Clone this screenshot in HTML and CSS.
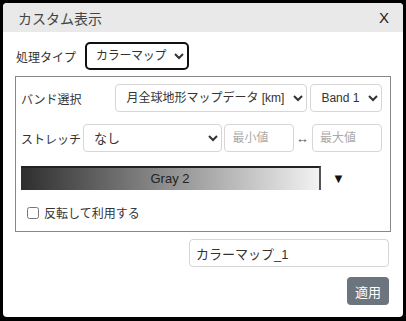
FILE: index.html
```html
<!DOCTYPE html>
<html lang="ja">
<head>
  <meta charset="UTF-8">
  <title>カスタム表示</title>
  <link rel="stylesheet" href="styles.css">
</head>
<body>

<div class="dialog">
  <div class="dialog-head">
    <span class="dialog-title">カスタム表示</span>
    <span class="dialog-close">X</span>
  </div>

  <div class="dialog-body">
    <div class="row type-row">
      <label class="label">処理タイプ</label>
      <select class="type-select">
        <option>カラーマップ</option>
      </select>
    </div>

    <div class="panel">
      <div class="row band-row">
        <label class="label band-label">バンド選択</label>
        <select class="ctrl data-select">
          <option>月全球地形マップデータ [km]</option>
        </select>
        <select class="ctrl band-select">
          <option>Band 1</option>
        </select>
      </div>

      <div class="row stretch-row">
        <label class="label">ストレッチ</label>
        <select class="ctrl stretch-select">
          <option>なし</option>
        </select>
        <input class="ctrl num-input" type="text" placeholder="最小値">
        <span class="range-arrow">↔</span>
        <input class="ctrl num-input" type="text" placeholder="最大値">
      </div>

      <div class="row ramp-row">
        <div class="ramp">Gray 2</div>
        <span class="ramp-toggle">▼</span>
      </div>

      <div class="row check-row">
        <input type="checkbox" id="reverse">
        <label for="reverse">反転して利用する</label>
      </div>
    </div>

    <div class="name-row">
      <input class="ctrl name-input" type="text" value="カラーマップ_1">
    </div>

    <div class="foot">
      <button class="apply">適用</button>
    </div>
  </div>
</div>

</body>
</html>
```

FILE: styles.css
```css
body {
  margin: 0;
  padding: 3px;
  background: #000;
  font-family: 'Liberation Sans', 'Noto Sans CJK JP', sans-serif;
  font-size: 12px;
  color: #333;
}
.dialog {
  width: 400px;
  height: 314px;
  background: #fff;
  border-radius: 4px;
  overflow: hidden;
}
.dialog-head {
  height: 29px;
  background: #e9e9e9;
  display: flex;
  align-items: center;
  justify-content: space-between;
  padding: 0 14px 0 15px;
}
.dialog-title {
  font-size: 14px;
  color: #444;
}
.dialog-close {
  font-size: 15px;
  color: #222;
}
.dialog-body {
  padding: 10px 12px 0 12px;
}
.row {
  display: flex;
  align-items: center;
}
.label {
  white-space: nowrap;
}
.type-row {
  height: 28px;
  padding-left: 1px;
}
.type-select {
  margin-left: 9px;
  width: 104px;
  height: 28px;
  border: 2px solid #111;
  border-radius: 5px;
  background: #fff;
  font: inherit;
  letter-spacing: -0.3px;
  color: #333;
  padding: 0 0 0 5px;
}
.panel {
  margin-top: 6px;
  border: 1px solid #888;
  padding: 7px 8px 0 5px;
  height: 147px;
}
.ctrl {
  height: 28px;
  box-sizing: border-box;
  border: 1px solid #d6d6d6;
  border-radius: 4px;
  background: #fff;
  font: inherit;
  color: #333;
}
.band-label {
  width: 95px;
}
.data-select {
  width: 192px;
  padding: 0 6px;
}
.band-select {
  width: 72px;
  margin-left: 3px;
  padding: 0 0 0 6px;
}
.stretch-row {
  margin-top: 12px;
}
.stretch-select {
  width: 143px;
  margin-left: 2px;
  padding: 0 6px;
  font-size: 13px;
}
.num-input {
  width: 70px;
  margin-left: 2px;
  padding: 0 7px;
}
.num-input::placeholder {
  color: #aaa;
}
.range-arrow {
  width: 16px;
  text-align: center;
  font-size: 13px;
  color: #555;
}
.ramp-row {
  margin-top: 14px;
}
.ramp {
  width: 300px;
  height: 24px;
  box-sizing: border-box;
  border-top: 2px solid #222;
  border-right: 2px solid #555;
  background: linear-gradient(to right, #2e2e2e, #f2f2f2);
  text-align: center;
  line-height: 22px;
  font-size: 13px;
  color: #222;
}
.ramp-toggle {
  margin-left: 11px;
  font-size: 13px;
  color: #111;
}
.check-row {
  margin-top: 14px;
  padding-left: 5px;
}
.check-row input {
  width: 12px;
  height: 12px;
  margin: 0 5px 0 1px;
}
.name-row {
  margin-top: 7px;
  display: flex;
  justify-content: flex-end;
  padding-right: 2px;
}
.name-input {
  width: 200px;
  padding: 0 6px;
  font-size: 13px;
}
.foot {
  margin-top: 10px;
  display: flex;
  justify-content: flex-end;
  padding-right: 2px;
}
.apply {
  width: 42px;
  height: 28px;
  border: none;
  border-radius: 4px;
  background: #6c757d;
  color: #fff;
  font: inherit;
  font-size: 13px;
  padding: 0;
}
```
